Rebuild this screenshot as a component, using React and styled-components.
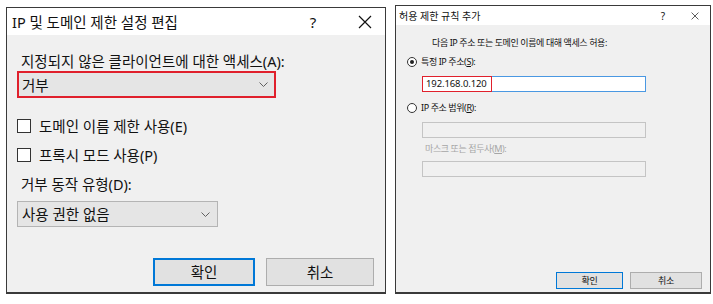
import styled, { createGlobalStyle, css } from "styled-components";

const GlobalStyle = createGlobalStyle`
  html, body {
    margin: 0;
    padding: 0;
    background: #fff;
  }
  body {
    font-family: "Noto Sans", "Noto Sans CJK KR", sans-serif;
    color: #111;
  }
`;

function Chevron() {
  return (
    <svg width="9" height="5" viewBox="0 0 9 5">
      <path d="M0.5 0.5 L4.5 4.5 L8.5 0.5" fill="none" stroke="#606060" strokeWidth="1" />
    </svg>
  );
}

function CloseIcon({ size }) {
  return (
    <svg width={size} height={size} viewBox="0 0 14 14">
      <path d="M1 1 L13 13 M13 1 L1 13" stroke="#111" strokeWidth="1.2" />
    </svg>
  );
}

function App() {
  return (
    <>
      <GlobalStyle />
      <Page>
        <Dialog $w={380} $h={287}>
          <TitleBar $h={28} $size={14.5}>
            <Title $pad={5}>IP 및 도메인 제한 설정 편집</Title>
            <Help $size={15}>?</Help>
            <CloseBox $gap={35} $right={13}>
              <CloseIcon size={14} />
            </CloseBox>
          </TitleBar>
          <BigBody>
            <BigLabel>지정되지 않은 클라이언트에 대한 액세스(A):</BigLabel>
            <Select $w={259} $h={27} $marked>
              <span>거부</span>
              <Chevron />
            </Select>
            <CheckRow $mt={19}>
              <CheckBox />
              <span>도메인 이름 제한 사용(E)</span>
            </CheckRow>
            <CheckRow $mt={11}>
              <CheckBox />
              <span>프록시 모드 사용(P)</span>
            </CheckRow>
            <BigLabel $mt={11}>거부 동작 유형(D):</BigLabel>
            <Select $w={201} $h={26} $mt={7}>
              <span>사용 권한 없음</span>
              <Chevron />
            </Select>
            <ButtonRow $gap={11}>
              <BigButton $w={102} $primary>확인</BigButton>
              <BigButton $w={108}>취소</BigButton>
            </ButtonRow>
          </BigBody>
        </Dialog>

        <Dialog $w={316} $h={289}>
          <TitleBar $h={20} $size={10}>
            <Title $pad={3}>허용 제한 규칙 추가</Title>
            <Help $size={10}>?</Help>
            <CloseBox $gap={18} $right={11}>
              <CloseIcon size={8} />
            </CloseBox>
          </TitleBar>
          <SmallBody>
            <SmallLabel $indent={25}>다음 IP 주소 또는 도메인 이름에 대해 액세스 허용:</SmallLabel>
            <RadioRow $mt={7}>
              <Radio $checked />
              <span>
                특정 IP 주소(<u>S</u>):
              </span>
            </RadioRow>
            <Field $mt={8} $active>
              <Marked>192.168.0.120</Marked>
            </Field>
            <RadioRow $mt={10}>
              <Radio />
              <span>
                IP 주소 범위(<u>R</u>):
              </span>
            </RadioRow>
            <Field $mt={8} />
            <SmallLabel $indent={18} $mt={5} $disabled>
              마스크 또는 접두사(<u>M</u>):
            </SmallLabel>
            <Field $mt={6} />
            <ButtonRow $gap={7}>
              <SmallButton $w={67} $primary>확인</SmallButton>
              <SmallButton $w={72}>취소</SmallButton>
            </ButtonRow>
          </SmallBody>
        </Dialog>
      </Page>
    </>
  );
}

export default App;

const Page = styled.div`
  height: 304px;
  box-sizing: border-box;
  display: flex;
  align-items: flex-end;
  gap: 9px;
  padding: 0 0 10px 6px;
`;

const Dialog = styled.div`
  width: ${(p) => p.$w}px;
  height: ${(p) => p.$h}px;
  box-sizing: border-box;
  border: 1px solid #3a3a3a;
  border-bottom-width: 2px;
  background: #f0f0f0;
  display: flex;
  flex-direction: column;
`;

const TitleBar = styled.div`
  height: ${(p) => p.$h - 1}px;
  flex: none;
  background: #fff;
  display: flex;
  align-items: center;
  font-size: ${(p) => p.$size}px;
`;

const Title = styled.div`
  flex: 1;
  padding-left: ${(p) => p.$pad}px;
  white-space: nowrap;
`;

const Help = styled.div`
  width: 20px;
  text-align: center;
  font-size: ${(p) => p.$size}px;
`;

const CloseBox = styled.div`
  display: flex;
  margin-left: ${(p) => p.$gap}px;
  margin-right: ${(p) => p.$right}px;
`;

const BigBody = styled.div`
  flex: 1;
  display: flex;
  flex-direction: column;
  padding: 17px 11px 6px 10px;
  font-size: 14.5px;
  line-height: 18px;
`;

const BigLabel = styled.div`
  padding-left: 4px;
  margin-top: ${(p) => p.$mt || 0}px;
  margin-bottom: 1px;
  white-space: nowrap;
`;

const Select = styled.div`
  width: ${(p) => p.$w}px;
  height: ${(p) => p.$h}px;
  margin-top: ${(p) => p.$mt || 0}px;
  box-sizing: border-box;
  display: flex;
  align-items: center;
  justify-content: space-between;
  padding: 0 7px 0 4px;
  background: #e5e5e5;
  border: 1px solid #b4b4b4;
  ${(p) =>
    p.$marked &&
    css`
      border: 2px solid #e0202c;
      padding-left: 3px;
      padding-right: 6px;
    `}
`;

const CheckRow = styled.div`
  display: flex;
  align-items: center;
  gap: 8px;
  margin-top: ${(p) => p.$mt}px;
`;

const CheckBox = styled.span`
  width: 14px;
  height: 14px;
  box-sizing: border-box;
  border: 1px solid #333;
  background: #fff;
`;

const ButtonRow = styled.div`
  margin-top: auto;
  display: flex;
  justify-content: flex-end;
  gap: ${(p) => p.$gap}px;
`;

const buttonBase = css`
  width: ${(p) => p.$w}px;
  box-sizing: border-box;
  display: flex;
  align-items: center;
  justify-content: center;
  background: #e1e1e1;
  border: 1px solid #adadad;
`;

const BigButton = styled.div`
  ${buttonBase}
  height: 28px;
  ${(p) => p.$primary && "border: 2px solid #0078d7;"}
`;

const SmallButton = styled.div`
  ${buttonBase}
  height: 17px;
  font-size: 9px;
  ${(p) => p.$primary && "border: 1.5px solid #0078d7;"}
`;

const SmallBody = styled.div`
  flex: 1;
  display: flex;
  flex-direction: column;
  padding: 12px 8px 3px 11px;
  font-size: 9px;
  letter-spacing: -0.4px;
  line-height: 12px;
`;

const SmallLabel = styled.div`
  padding-left: ${(p) => p.$indent}px;
  margin-top: ${(p) => p.$mt || 0}px;
  color: ${(p) => (p.$disabled ? "#a6a6a6" : "#111")};
  white-space: nowrap;
`;

const RadioRow = styled.div`
  display: flex;
  align-items: center;
  gap: 4px;
  margin-top: ${(p) => p.$mt}px;
`;

const Radio = styled.span`
  width: 10px;
  height: 10px;
  box-sizing: border-box;
  border-radius: 50%;
  border: 1px solid #333;
  background: #fff;
  display: flex;
  align-items: center;
  justify-content: center;
  &::after {
    content: "";
    width: 4px;
    height: 4px;
    border-radius: 50%;
    background: ${(p) => (p.$checked ? "#222" : "transparent")};
  }
`;

const Field = styled.div`
  width: 224px;
  height: 16px;
  margin-left: 15px;
  margin-top: ${(p) => p.$mt}px;
  box-sizing: border-box;
  display: flex;
  border: 1px solid ${(p) => (p.$active ? "#4a98e2" : "#c4c4c4")};
  background: ${(p) => (p.$active ? "#fff" : "#f0f0f0")};
`;

const Marked = styled.span`
  margin: -1px 0 -1px -1px;
  padding: 0 4px 0 3px;
  border: 1.5px solid #e0202c;
  display: flex;
  align-items: center;
  font-size: 9.5px;
  letter-spacing: -0.1px;
`;
